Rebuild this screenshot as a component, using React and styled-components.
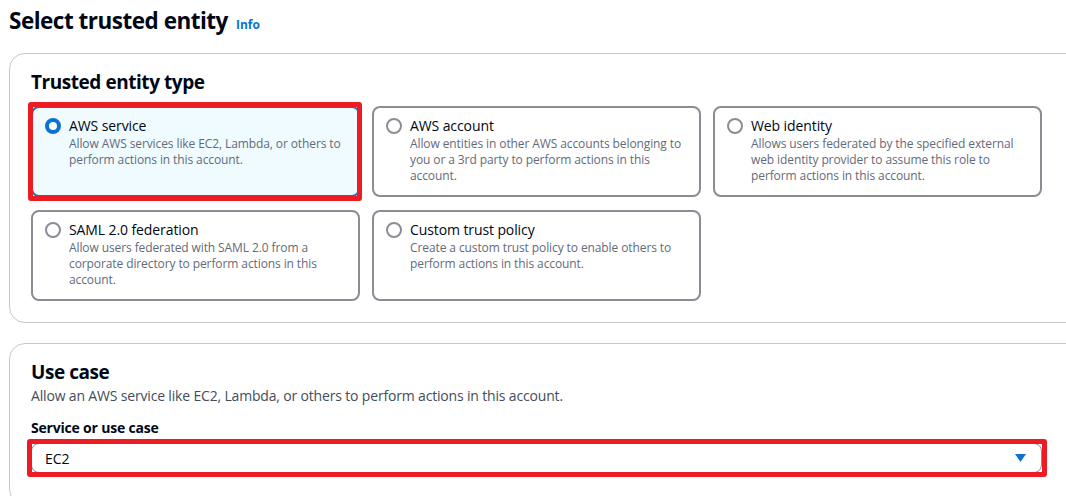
import React from "react";
import styled, { createGlobalStyle } from "styled-components";

const Global = createGlobalStyle`
  html, body { margin: 0; padding: 0; background: #ffffff; overflow: hidden; }
  body { font-family: "Open Sans", "Noto Sans", sans-serif; color: #000716; }
  * { box-sizing: border-box; }
`;

const Page = styled.div`
  width: 1100px;
  padding: 6px 0 0 9px;
  display: flex;
  flex-direction: column;
  gap: 20px;
`;

const TitleRow = styled.div`
  display: flex;
  align-items: baseline;
  gap: 8px;
  height: 30px;
  margin-bottom: -3px;
`;

const PageTitle = styled.h1`
  margin: 0;
  font-size: 22.5px;
  line-height: 30px;
  font-weight: 700;
  letter-spacing: -0.5px;
  color: #000716;
`;

const InfoLink = styled.a`
  font-size: 12px;
  font-weight: 700;
  color: #0972d3;
  text-decoration: none;
`;

const Container = styled.section`
  border: 1px solid #c6c6cd;
  border-radius: 16px;
  padding: 16px 21px 21px;
  background: #fff;
`;

const Content = styled.div`
  width: 1011px;
  display: flex;
  flex-direction: column;
`;

const SectionHeading = styled.h2`
  margin: 0;
  font-size: 19px;
  line-height: 24px;
  font-weight: 700;
  letter-spacing: -0.45px;
  color: #000716;
`;

const TileGrid = styled.div`
  margin-top: 12px;
  display: grid;
  grid-template-columns: repeat(3, 329px);
  gap: 13px 12px;
`;

const Tile = styled.label`
  position: relative;
  display: flex;
  gap: 8px;
  min-height: 91px;
  padding: 8px 12px 11px;
  border: 2px solid ${(p) => (p.$selected ? "#0972d3" : "#8c8c94")};
  border-radius: 8px;
  background: ${(p) => (p.$selected ? "#f0fbff" : "#ffffff")};
  cursor: pointer;
`;

const Highlight = styled.span`
  position: absolute;
  top: ${(p) => p.$t}px;
  left: ${(p) => p.$l}px;
  right: ${(p) => p.$r}px;
  bottom: ${(p) => p.$b}px;
  border: 5px solid #ec1c24;
  border-radius: 3px;
  pointer-events: none;
`;

const Radio = styled.span`
  flex: 0 0 16px;
  width: 16px;
  height: 16px;
  margin-top: 2px;
  border-radius: 50%;
  border: ${(p) => (p.$checked ? "4.5px solid #0972d3" : "2px solid #8c8c94")};
  background: #fff;
`;

const TileText = styled.div`
  display: flex;
  flex-direction: column;
`;

const TileTitle = styled.span`
  font-size: 14px;
  line-height: 20px;
  color: #000716;
  letter-spacing: -0.1px;
`;

const TileDesc = styled.span`
  font-size: 12px;
  line-height: 16px;
  color: #5f6b7a;
  letter-spacing: -0.1px;
`;

const Description = styled.p`
  margin: 2px 0 0;
  font-size: 14px;
  line-height: 20px;
  color: #414d5c;
  letter-spacing: -0.17px;
`;

const FieldLabel = styled.div`
  margin-top: 12px;
  font-size: 14px;
  line-height: 20px;
  font-weight: 700;
  color: #000716;
  letter-spacing: -0.2px;
`;

const SelectWrap = styled.div`
  position: relative;
  margin-top: 5px;
  margin-bottom: 10px;
`;

const Select = styled.div`
  height: 30px;
  display: flex;
  align-items: center;
  justify-content: space-between;
  padding: 0 15px 0 13px;
  border: 1px solid #8c8c94;
  border-radius: 8px;
  background: #fff;
  font-size: 14px;
  color: #000716;
`;

const Caret = styled.svg`
  width: 11px;
  height: 8px;
  display: block;
`;

const tiles = [
  {
    title: "AWS service",
    desc: "Allow AWS services like EC2, Lambda, or others to perform actions in this account.",
    selected: true,
  },
  {
    title: "AWS account",
    desc: "Allow entities in other AWS accounts belonging to you or a 3rd party to perform actions in this account.",
  },
  {
    title: "Web identity",
    desc: "Allows users federated by the specified external web identity provider to assume this role to perform actions in this account.",
  },
  {
    title: "SAML 2.0 federation",
    desc: "Allow users federated with SAML 2.0 from a corporate directory to perform actions in this account.",
  },
  {
    title: "Custom trust policy",
    desc: "Create a custom trust policy to enable others to perform actions in this account.",
  },
];

export default function App() {
  return (
    <>
      <Global />
      <Page>
        <TitleRow>
          <PageTitle>Select trusted entity</PageTitle>
          <InfoLink href="#">Info</InfoLink>
        </TitleRow>
        <Container>
          <Content>
            <SectionHeading>Trusted entity type</SectionHeading>
            <TileGrid>
              {tiles.map((t) => (
                <Tile key={t.title} $selected={t.selected}>
                  <Radio $checked={t.selected} />
                  <TileText>
                    <TileTitle>{t.title}</TileTitle>
                    <TileDesc>{t.desc}</TileDesc>
                  </TileText>
                  {t.selected && <Highlight $t={-6} $l={-5} $r={-4} $b={-6} />}
                </Tile>
              ))}
            </TileGrid>
          </Content>
        </Container>
        <Container>
          <Content>
            <SectionHeading>Use case</SectionHeading>
            <Description>
              Allow an AWS service like EC2, Lambda, or others to perform actions in this account.
            </Description>
            <FieldLabel>Service or use case</FieldLabel>
            <SelectWrap>
              <Select>
                <span>EC2</span>
                <Caret viewBox="0 0 11 8">
                  <path d="M0 0 H11 L5.5 8 Z" fill="#0972d3" />
                </Caret>
              </Select>
              <Highlight $t={-4} $l={-4} $r={-5} $b={-4} />
            </SelectWrap>
          </Content>
        </Container>
      </Page>
    </>
  );
}
